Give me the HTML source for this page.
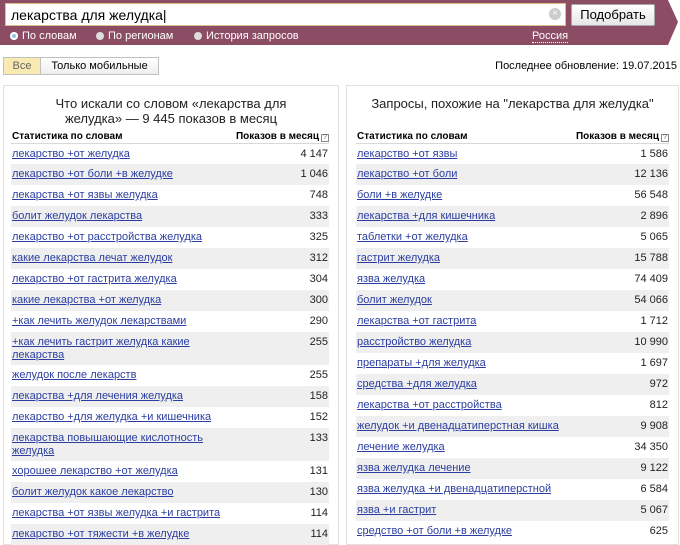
<!DOCTYPE html>
<html><head><meta charset="utf-8"><style>
*{margin:0;padding:0;box-sizing:border-box}
body{width:680px;height:538px;overflow:hidden;background:#fff;font-family:"Liberation Sans",Arial,sans-serif;position:relative;color:#000}
.band{position:absolute;left:0;top:0;width:680px;height:45px}
.inp{position:absolute;left:5px;top:3px;width:561px;height:23px;background:#fff;border:1px solid #d9c08a;font-size:14px;padding:2px 5px;line-height:18px}
.clr{position:absolute;left:549px;top:8px;width:12px;height:12px;border-radius:50%;background:#ccc;color:#fff;font-size:10px;line-height:12px;text-align:center}
.btn{position:absolute;left:571px;top:4px;width:84px;height:22px;background:linear-gradient(#fff,#e6e6e6);border:1px solid #aaa;border-radius:2px;font-size:13px;text-align:center;line-height:20px}
.rad{position:absolute;top:29px;font-size:11px;color:#fff;line-height:12px}
.rad i{display:inline-block;width:8px;height:8px;border-radius:50%;background:#ddd;margin-right:4px;vertical-align:-1px}
.seg{position:absolute;top:57px;height:18px;border:1px solid #c0c0c0;font-size:11px;line-height:16px;text-align:center}
.upd{position:absolute;right:3px;top:60px;font-size:11px}
.panel{position:absolute;top:85px;border:1px solid #e0e0e0;height:460px}
.ttl{text-align:center;font-size:13px;line-height:15px;color:#222}
table{border-collapse:collapse;position:absolute;font-size:11px}
th{font-size:10px;font-weight:bold;text-align:left;height:15px;border-bottom:1px solid #d8d8d8;padding:0 0 1px 1px;vertical-align:bottom}
th.r{text-align:right}
td{height:21px;vertical-align:top;padding:4px 1px 0 1px;line-height:13px}
td a{color:#2b3ea0;text-decoration:underline}
td.n{text-align:right;color:#222}
tr:nth-child(odd) td{background:#efefef}
tr:first-child td{background:none}
.q{display:inline-block;width:8px;height:8px;border:1px solid #888;font-size:7px;line-height:6px;text-align:center;font-weight:normal;margin-left:2px;color:#666}
</style></head><body>
<svg class="band" width="680" height="45"><polygon points="0,0 668,0 678,22 668,45 0,45" fill="#8c4c63"/></svg>
<div class="inp">лекарства для желудка|</div>
<div class="clr">×</div>
<div class="btn">Подобрать</div>
<div class="rad" style="left:10px;top:30px"><i style="background:#9bc0e0;box-shadow:inset 0 0 0 2px #fff"></i>По словам</div>
<div class="rad" style="left:96px;top:30px"><i></i>По регионам</div>
<div class="rad" style="left:194px;top:30px"><i></i>История запросов</div>
<div class="rad" style="left:532px;top:30px;border-bottom:1px dotted #fff">Россия</div>
<div class="seg" style="left:3px;width:38px;background:#f8eab0;color:#666">Все</div>
<div class="seg" style="left:40px;width:119px;background:linear-gradient(#fff,#eee)">Только мобильные</div>
<div class="upd">Последнее обновление: 19.07.2015</div>

<div class="panel" style="left:3px;width:336px">
<div class="ttl" style="margin-top:10px">Что искали со словом «лекарства для<br>желудка» — 9 445 показов в месяц</div>
<table style="left:7px;top:42px;width:318px">
<tr><th>Статистика по словам</th><th class="r">Показов в месяц<span class="q">?</span></th></tr>
<tr><td><a>лекарство +от желудка</a></td><td class="n">4 147</td></tr>
<tr><td><a>лекарство +от боли +в желудке</a></td><td class="n">1 046</td></tr>
<tr><td><a>лекарства +от язвы желудка</a></td><td class="n">748</td></tr>
<tr><td><a>болит желудок лекарства</a></td><td class="n">333</td></tr>
<tr><td><a>лекарство +от расстройства желудка</a></td><td class="n">325</td></tr>
<tr><td><a>какие лекарства лечат желудок</a></td><td class="n">312</td></tr>
<tr><td><a>лекарство +от гастрита желудка</a></td><td class="n">304</td></tr>
<tr><td><a>какие лекарства +от желудка</a></td><td class="n">300</td></tr>
<tr><td><a>+как лечить желудок лекарствами</a></td><td class="n">290</td></tr>
<tr><td style="height:33px"><a>+как лечить гастрит желудка какие<br>лекарства</a></td><td class="n">255</td></tr>
<tr><td><a>желудок после лекарств</a></td><td class="n">255</td></tr>
<tr><td><a>лекарства +для лечения желудка</a></td><td class="n">158</td></tr>
<tr><td><a>лекарство +для желудка +и кишечника</a></td><td class="n">152</td></tr>
<tr><td style="height:33px"><a>лекарства повышающие кислотность<br>желудка</a></td><td class="n">133</td></tr>
<tr><td><a>хорошее лекарство +от желудка</a></td><td class="n">131</td></tr>
<tr><td><a>болит желудок какое лекарство</a></td><td class="n">130</td></tr>
<tr><td><a>лекарства +от язвы желудка +и гастрита</a></td><td class="n">114</td></tr>
<tr><td><a>лекарство +от тяжести +в желудке</a></td><td class="n">114</td></tr>
</table>
</div>

<div class="panel" style="left:346px;width:333px">
<div class="ttl" style="margin-top:10px">Запросы, похожие на "лекарства для желудка"</div>
<table style="left:9px;top:42px;width:313px">
<tr><th>Статистика по словам</th><th class="r">Показов в месяц<span class="q">?</span></th></tr>
<tr><td><a>лекарство +от язвы</a></td><td class="n">1 586</td></tr>
<tr><td><a>лекарство +от боли</a></td><td class="n">12 136</td></tr>
<tr><td><a>боли +в желудке</a></td><td class="n">56 548</td></tr>
<tr><td><a>лекарства +для кишечника</a></td><td class="n">2 896</td></tr>
<tr><td><a>таблетки +от желудка</a></td><td class="n">5 065</td></tr>
<tr><td><a>гастрит желудка</a></td><td class="n">15 788</td></tr>
<tr><td><a>язва желудка</a></td><td class="n">74 409</td></tr>
<tr><td><a>болит желудок</a></td><td class="n">54 066</td></tr>
<tr><td><a>лекарства +от гастрита</a></td><td class="n">1 712</td></tr>
<tr><td><a>расстройство желудка</a></td><td class="n">10 990</td></tr>
<tr><td><a>препараты +для желудка</a></td><td class="n">1 697</td></tr>
<tr><td><a>средства +для желудка</a></td><td class="n">972</td></tr>
<tr><td><a>лекарства +от расстройства</a></td><td class="n">812</td></tr>
<tr><td><a>желудок +и двенадцатиперстная кишка</a></td><td class="n">9 908</td></tr>
<tr><td><a>лечение желудка</a></td><td class="n">34 350</td></tr>
<tr><td><a>язва желудка лечение</a></td><td class="n">9 122</td></tr>
<tr><td><a>язва желудка +и двенадцатиперстной</a></td><td class="n">6 584</td></tr>
<tr><td><a>язва +и гастрит</a></td><td class="n">5 067</td></tr>
<tr><td><a>средство +от боли +в желудке</a></td><td class="n">625</td></tr>
</table>
</div>
</body></html>
